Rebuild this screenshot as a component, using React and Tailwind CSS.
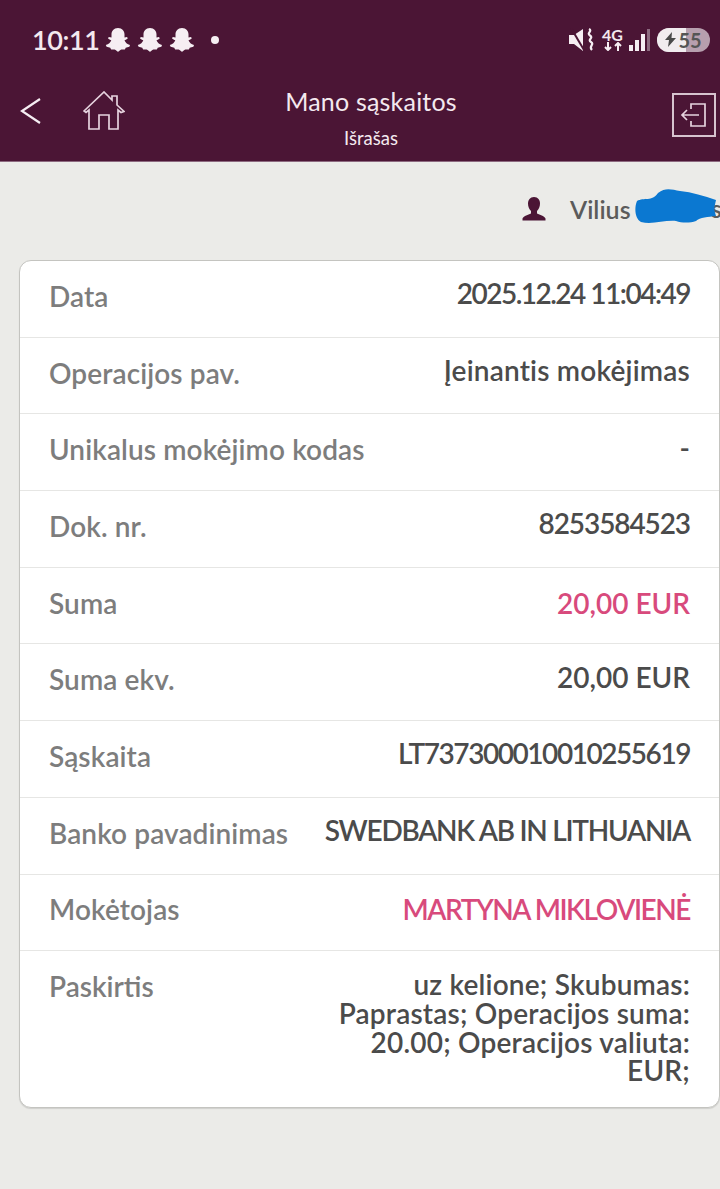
import React from "react";

const rows = [
  ["Data", "2025.12.24 11:04:49", "-mt-[11px] tracking-[-1.500px] text-[#4b4b4b]"],
  ["Operacijos pav.", "Įeinantis mokėjimas", "-mt-[11px] tracking-[0.200px] text-[#4b4b4b]"],
  ["Unikalus mokėjimo kodas", "-", "-mt-[11px] text-[#4b4b4b]"],
  ["Dok. nr.", "8253584523", "-mt-[11px] tracking-[-1.100px] text-[#4b4b4b]"],
  ["Suma", "20,00 EUR", "-mt-[6px] text-[#d84a7c]"],
  ["Suma ekv.", "20,00 EUR", "-mt-[11px] text-[#4b4b4b]"],
  ["Sąskaita", "LT737300010010255619", "-mt-[11px] tracking-[-1.450px] text-[#4b4b4b]"],
  ["Banko pavadinimas", "SWEDBANK AB IN LITHUANIA", "-mt-[11px] tracking-[-1.250px] text-[#4b4b4b]"],
  ["Mokėtojas", "MARTYNA MIKLOVIENĖ", "-mt-[6px] tracking-[-1.450px] text-[#d84a7c]"],
];

function Ghost() {
  return (
    <svg width="26" height="25" viewBox="0 0 26 25" fill="#f6eef3">
      <path d="M13 1c4.200 0 6.500 3 6.500 6.500v3l2.500-.6.800 1.300c-.8 1.200-2.300 1.500-3.300 2 .8 2.200 2.600 4 5.500 4.800l-.6 1.700c-1.300.5-2.600.5-3.700 1-.6 1-.5 2-1.800 1.800-2.500-.4-3.800.2-5.400 1.900-.4.300-.6.400-1 0-1.600-1.700-2.900-2.300-5.400-1.900-1.300.2-1.200-.8-1.800-1.800-1.100-.5-2.400-.5-3.700-1L.8 18c2.900-.8 4.700-2.600 5.500-4.800-1-.5-2.500-.8-3.300-2l.8-1.300 2.700.6v-3C6.500 4 8.800 1 13 1z" />
    </svg>
  );
}

export default function App() {
  return (
    <div className="min-h-[1189px] w-[720px] overflow-hidden bg-[#ebebe8] font-['Lato',sans-serif]">
      <header className="h-[162px] border-b border-[#8d6a80] bg-[#4b1535] text-[#f4e9ef]">
        <div className="flex h-[78px] items-center justify-between pl-[32px] pr-[10px] pt-[1px]">
          <div className="flex items-center">
            <span className="w-[73px] text-[27px] font-semibold leading-none tracking-[-0.400px]">10:11</span>
            <div className="flex gap-[6px]"><Ghost /><Ghost /><Ghost /></div>
            <span className="ml-[16px] h-[8px] w-[8px] rounded-full bg-[#f6eef3]" />
          </div>
          <div className="flex items-center">
            <svg width="25" height="24" viewBox="0 0 25 24" fill="#f6eef3">
              <path d="M0 7h5l9-6v22l-9-7H0z" />
              <path d="M2 0l13 22" stroke="#4b1535" strokeWidth="2" />
              <path d="M20 1c4 2-3 4 1 6.500s-3 4 1 6.500-3 4 1 8" fill="none" stroke="#f6eef3" strokeWidth="2.200" />
            </svg>
            <div className="ml-[8px] flex flex-col items-center text-[16px] font-bold leading-[14px]">
              <span>4G</span>
              <svg width="20" height="9" viewBox="0 0 20 9" fill="none" stroke="#f6eef3" strokeWidth="2">
                <path d="M5 0v8M2 5l3 3 3-3M15 9V1M12 4l3-3 3 3" />
              </svg>
            </div>
            <svg className="ml-[5px]" width="22" height="24" viewBox="0 0 22 24">
              <rect x="1" y="17" width="4" height="6" fill="#f6eef3" />
              <rect x="7" y="12" width="4" height="11" fill="#f6eef3" />
              <rect x="13" y="6" width="4" height="17" fill="#f6eef3" />
              <rect x="19" y="1" width="3" height="22" fill="#8d6a80" />
            </svg>
            <div className="relative ml-[7px] flex h-[24px] w-[53px] items-center justify-center overflow-hidden rounded-full bg-[#b79fae]">
              <span className="absolute left-0 top-0 h-full w-[29px] bg-[#f1ecef]" />
              <svg className="relative" width="11" height="15" viewBox="0 0 11 15" fill="#4a4a4a">
                <path d="M7 0L0 8h4l-1 7 8-9H6.500z" />
              </svg>
              <span className="relative ml-[2px] text-[20px] font-bold leading-none text-[#555]">55</span>
            </div>
          </div>
        </div>
        <div className="flex h-[83px] items-start pl-[20px] pr-[4px]">
          <div className="flex w-[150px] items-center pt-[13px]">
            <svg width="22" height="28" viewBox="0 0 22 28" fill="none" stroke="#f6eef3" strokeWidth="2.200">
              <path d="M20 2L2 14l18 12" />
            </svg>
            <svg className="ml-[41px]" width="42" height="40" viewBox="0 0 42 40" fill="none" stroke="#e6d3de" strokeWidth="1.700">
              <path d="M1 20L21 1l8 8V5h5v9l7 6.500-3 1-3-2.500V38H26V24H16v14H6V19l-3 2.500z" />
            </svg>
          </div>
          <div className="w-[402px] pt-[8px] text-center">
            <div className="text-[25px] leading-[30px] tracking-[0.200px]">Mano sąskaitos</div>
            <div className="mt-[12px] text-[18.500px] leading-[20px]">Išrašas</div>
          </div>
          <div className="ml-auto mt-[15px] flex h-[44px] w-[44px] items-center justify-center border-2 border-[#d7c3cf]">
            <svg width="28" height="24" viewBox="0 0 28 24" fill="none" stroke="#e6d3de" strokeWidth="1.700">
              <path d="M11 6V1h14v22H11v-5M2 12h17M7 7l-5 5 5 5" />
            </svg>
          </div>
        </div>
      </header>

      <div className="relative flex h-[98px] items-start justify-end pt-[34px]">
        <div className="flex w-[199px] items-center">
          <svg width="26" height="26" viewBox="0 0 26 26" fill="#4b1535">
            <path d="M13 1c4 0 6 3 6 6.500 0 3-1.200 6-3 7.500v2.500c3 1.500 7 2 8.500 5v2h-23v-2c1.500-3 5.500-3.500 8.500-5V15c-1.800-1.500-3-4.500-3-7.500C7 4 9 1 13 1z" />
          </svg>
          <span className="ml-[23px] text-[25px] font-semibold leading-none text-[#5b5b5b]">Vilius</span>
        </div>
        <span className="absolute left-[711px] top-[34px] text-[25px] font-semibold leading-none text-[#5b5b5b]">s</span>
        <svg className="absolute left-[634px] top-[26px]" width="82" height="36" viewBox="0 0 82 36" fill="#0b78d1">
          <path d="M3 13C10 9 18 14 24 5c8-6 14-3 22-2 12 1 24 5 36 9l-2 9 2 7c-8 1-16 1-20 5-6 2-14 2-20 0-12-1-24 4-35 1C1 31 0 20 3 13z" />
        </svg>
      </div>

      <main className="ml-[19px] h-[848px] w-[701px] rounded-[12px] border border-[#c4c4c0] bg-white shadow-[0_1px_1px_rgba(0,0,0,0.12)]">
        {rows.map(([label, value, valueClass]) => (
          <div key={label} className="flex h-[76.700px] items-center justify-between border-b border-[#e6e6e4] pl-[29px] pr-[29px] text-[28px] leading-none">
            <span className="-mt-[6px] font-semibold tracking-[0.100px] text-[#7d7d7d]">{label}</span>
            <span className={`font-semibold ${valueClass}`}>{value}</span>
          </div>
        ))}
        <div className="flex items-start justify-between pl-[29px] pr-[29px] pt-[19px] text-[28px]">
          <span className="font-semibold leading-[32px] text-[#7d7d7d]">Paskirtis</span>
          <div className="w-[372px] text-right font-semibold leading-[28.700px] tracking-[0.200px] text-[#4b4b4b]">
            uz kelione; Skubumas: Paprastas; Operacijos suma: 20.00; Operacijos valiuta: EUR;
          </div>
        </div>
      </main>
    </div>
  );
}
